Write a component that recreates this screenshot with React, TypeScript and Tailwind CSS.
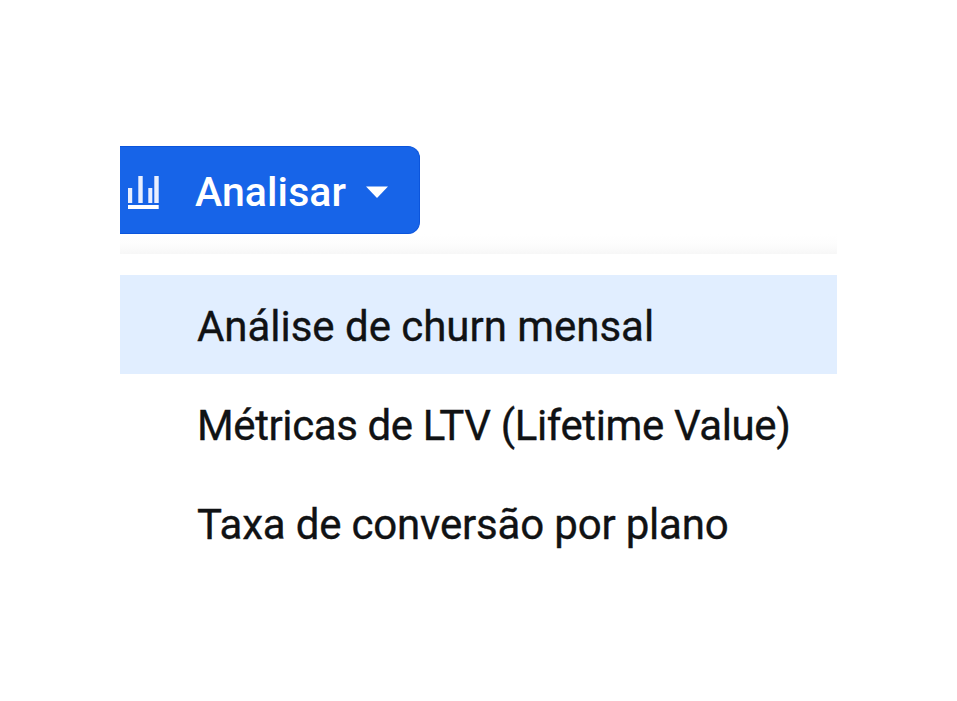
import React, { useState } from "react";

interface MenuItem {
  id: string;
  label: string;
  className: string;
}

const items: MenuItem[] = [
  { id: "churn", label: "Análise de churn mensal", className: "tracking-[-0.03px]" },
  { id: "ltv", label: "Métricas de LTV (Lifetime Value)", className: "tracking-[-0.39px]" },
  { id: "conversao", label: "Taxa de conversão por plano", className: "tracking-[-0.19px]" }
];

const ChartIcon: React.FC = () => (
  <svg className="w-8 h-[34px] shrink-0" viewBox="0 0 32 34" fill="none">
    <path fill="#e9efff" d="M0 13h4.200v15H0zM10.300 1H14.700v27h-4.400zM20.300 13h4v15h-4zM26.300 1h4.400v27h-4.400z" />
    <path fill="#fff" d="M0 30h30.700v4H0z" />
  </svg>
);

const CaretIcon: React.FC = () => (
  <svg className="w-[22px] h-3 shrink-0" viewBox="0 0 22 12">
    <path fill="#fff" d="M0 0.500h22L11 12z" />
  </svg>
);

export default function App() {
  const [selected, setSelected] = useState("churn");

  return (
    <div className="h-screen w-full overflow-hidden bg-white pl-[120px] pt-[146px] font-['Roboto','Liberation_Sans',sans-serif]">
      <button className="flex h-[88px] w-[300px] items-center rounded-r-[12px] border-y border-r border-[#0b55dc] bg-[#1764e8] pl-2 pt-1 text-white">
        <ChartIcon />
        <span className="ml-[35px] w-[152px] whitespace-nowrap text-left text-[41px] font-medium leading-none tracking-[0.1px]">Analisar</span>
        <span className="ml-[19px]">
          <CaretIcon />
        </span>
      </button>
      <div className="w-[717px]">
        <div className="h-5 bg-linear-to-b from-white via-[#fdfdfd] to-[#f7f7f7]" />
        <ul className="pt-[21px]">
          {items.map(item => (
            <li
              key={item.id}
              onClick={() => setSelected(item.id)}
              className={`flex h-[99px] cursor-pointer items-center pl-[77px] pt-[5px] text-[42px] leading-none text-[#101214] [-webkit-text-stroke:0.35px_#101214] ${selected === item.id ? "bg-[#e1eeff]" : ""}`}
            >
              <span className={`whitespace-nowrap ${item.className}`}>{item.label}</span>
            </li>
          ))}
        </ul>
      </div>
    </div>
  );
}
